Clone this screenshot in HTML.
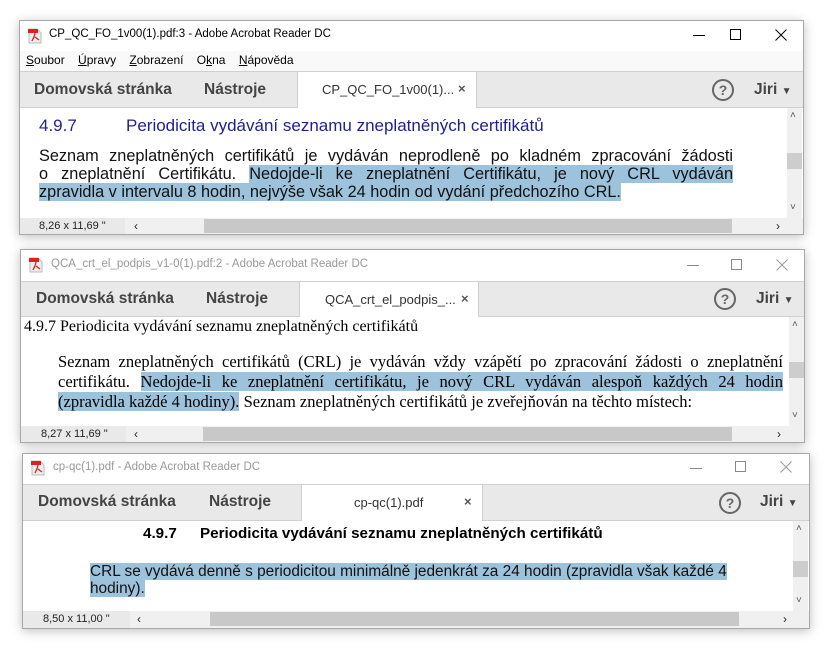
<!DOCTYPE html>
<html><head><meta charset="utf-8"><style>
*{margin:0;padding:0;box-sizing:border-box}
body{width:840px;height:656px;background:#fff;position:relative;overflow:hidden;font-family:"Liberation Sans","DejaVu Sans",sans-serif}
.win{position:absolute;background:#fff;border:1px solid #a8a8a8;box-shadow:0 2px 10px rgba(0,0,0,.25);overflow:hidden}
.a{position:absolute;white-space:nowrap}
.title{font-size:11.5px;color:#000}
.inact{color:#999}
.tb{position:absolute;left:0;right:0;background:#e9e9e9;border-top:1px solid #d0d0d0;border-bottom:1px solid #d0d0d0}
.tbt{font-size:15.5px;font-weight:bold;color:#444}
.tab{position:absolute;background:#fff;border-left:1px solid #cfcfcf;border-right:1px solid #cfcfcf;top:0;bottom:-1px}
.help{position:absolute;width:22px;height:22px;border:2px solid #666;border-radius:50%;color:#666;font-size:14px;font-weight:bold;text-align:center;line-height:18px}
.vs{position:absolute;width:15px;background:#f0f0f0}
.thumb{position:absolute;left:0;width:15px;height:16px;background:#cdcdcd}
.st{position:absolute;left:0;right:0;height:17px;background:#f0f0f0;font-size:11px;color:#222}
.hl{background:#9dc3dc}
.j{text-align:justify;text-align-last:justify}
</style></head><body>

<!-- WINDOW 1 -->
<div class="win" style="left:19px;top:20px;width:785px;height:215px">
  <svg class="a" style="left:8px;top:7px" width="14" height="16" viewBox="0 0 14 16"><path d="M1 1h8l4 4v10H1z" fill="#eee" stroke="#bbb"/><rect x="0" y="1" width="10" height="4" fill="#e31e1e"/><path d="M4 13c2-4 3-6 3-9M7 9l4 3" stroke="#e31e1e" fill="none" stroke-width="1.3"/></svg>
  <div class="a title" style="left:29px;top:7px">CP_QC_FO_1v00(1).pdf:3 - Adobe Acrobat Reader DC</div>
  <div class="a" style="left:673px;top:14px;width:12px;height:1px;background:#000"></div>
  <div class="a" style="left:710px;top:8px;width:11px;height:11px;border:1px solid #000"></div>
  <svg class="a" style="left:755px;top:8px" width="12" height="12"><path d="M0.5 0.5L11.5 11.5M11.5 0.5L0.5 11.5" stroke="#000" stroke-width="1"/></svg>
  <div class="a" style="left:0;right:0;top:30px;height:20px;background:#f9f9f9"></div>
  <div class="a" style="left:6px;top:32px;font-size:12px;word-spacing:10px"><u>S</u>oubor <u>Ú</u>pravy <u>Z</u>obrazení O<u>k</u>na <u>N</u>ápověda</div>
  <div class="tb" style="top:50px;height:37px">
    <div class="a tbt" style="left:14px;top:9px">Domovská stránka</div>
    <div class="a tbt" style="left:184px;top:9px">Nástroje</div>
    <div class="tab" style="left:277px;width:180px"><div class="a" style="left:24px;top:10px;font-size:13px;color:#333">CP_QC_FO_1v00(1)...</div><div class="a" style="left:160px;top:9px;font-size:13px;color:#555;font-weight:bold">×</div></div>
    <div class="help" style="left:692px;top:7px">?</div>
    <div class="a tbt" style="left:734px;top:9px">Jiri <span style="font-size:10px">▼</span></div>
  </div>
  <div class="a" style="left:19px;top:95px;font-size:17px;color:#1f1f8f">4.9.7</div>
  <div class="a" style="left:106px;top:95px;font-size:17px;color:#1f1f8f">Periodicita vydávání seznamu zneplatněných certifikátů</div>
  <div class="a" style="left:19px;top:126px;width:694px;font-size:16.3px;line-height:18px;color:#111;white-space:normal">
    <div class="j">Seznam zneplatněných certifikátů je vydáván neprodleně po kladném zpracování žádosti</div>
    <div class="j">o zneplatnění Certifikátu. <span class="hl">Nedojde-li ke zneplatnění Certifikátu, je nový CRL vydáván</span></div>
    <div><span class="hl">zpravidla v intervalu 8 hodin, nejvýše však 24 hodin od vydání předchozího CRL.</span></div>
  </div>
  <div class="vs" style="left:767px;top:87px;height:110px"><div class="a" style="left:3px;top:2px;font-size:10px;color:#555">˄</div><div class="thumb" style="top:45px"></div><div class="a" style="left:3px;top:94px;font-size:10px;color:#555">˅</div></div>
  <div class="st" style="top:197px">
    <div class="a" style="left:0;top:0;width:105px;height:17px;background:#e9e9e9"></div>
    <div class="a" style="left:19px;top:2px">8,26 x 11,69 "</div>
    <div class="a" style="left:114px;top:1px;font-size:12px">‹</div>
    <div class="a" style="left:184px;top:1px;width:528px;height:14px;background:#c8c8c8"></div>
    <div class="a" style="left:756px;top:1px;font-size:12px">›</div>
  </div>
</div>

<!-- WINDOW 2 -->
<div class="win" style="left:20px;top:249px;width:785px;height:194px">
  <svg class="a" style="left:8px;top:7px" width="14" height="16" viewBox="0 0 14 16"><path d="M1 1h8l4 4v10H1z" fill="#eee" stroke="#bbb"/><rect x="0" y="1" width="10" height="4" fill="#e31e1e"/><path d="M4 13c2-4 3-6 3-9M7 9l4 3" stroke="#e31e1e" fill="none" stroke-width="1.3"/></svg>
  <div class="a title inact" style="left:30px;top:8px">QCA_crt_el_podpis_v1-0(1).pdf:2 - Adobe Acrobat Reader DC</div>
  <div class="a" style="left:666px;top:15px;width:12px;height:1px;background:#888"></div>
  <div class="a" style="left:710px;top:9px;width:11px;height:11px;border:1px solid #888"></div>
  <svg class="a" style="left:755px;top:9px" width="12" height="12"><path d="M0.5 0.5L11.5 11.5M11.5 0.5L0.5 11.5" stroke="#999" stroke-width="1"/></svg>
  <div class="tb" style="top:31px;height:36px">
    <div class="a tbt" style="left:15px;top:8px">Domovská stránka</div>
    <div class="a tbt" style="left:185px;top:8px">Nástroje</div>
    <div class="tab" style="left:278px;width:180px"><div class="a" style="left:25px;top:10px;font-size:13px;color:#333">QCA_crt_el_podpis_...</div><div class="a" style="left:161px;top:9px;font-size:13px;color:#555;font-weight:bold">×</div></div>
    <div class="help" style="left:693px;top:6px">?</div>
    <div class="a tbt" style="left:735px;top:8px">Jiri <span style="font-size:10px">▼</span></div>
  </div>
  <div class="a" style="left:3px;top:68px;font-family:'Liberation Serif',serif;font-size:16px;color:#000">4.9.7 Periodicita vydávání seznamu zneplatněných certifikátů</div>
  <div class="a" style="left:37px;top:102px;width:725px;font-family:'Liberation Serif',serif;font-size:16.5px;line-height:20px;color:#000;white-space:normal">
    <div class="j">Seznam zneplatněných certifikátů (CRL) je vydáván vždy vzápětí po zpracování žádosti o zneplatnění</div>
    <div class="j">certifikátu. <span class="hl">Nedojde-li ke zneplatnění certifikátu, je nový CRL vydáván alespoň každých 24 hodin</span></div>
    <div><span class="hl">(zpravidla každé 4 hodiny).</span> Seznam zneplatněných certifikátů je zveřejňován na těchto místech:</div>
  </div>
  <div class="vs" style="left:768px;top:67px;height:109px"><div class="a" style="left:3px;top:2px;font-size:10px;color:#555">˄</div><div class="thumb" style="top:45px"></div><div class="a" style="left:3px;top:93px;font-size:10px;color:#555">˅</div></div>
  <div class="st" style="top:176px">
    <div class="a" style="left:0;top:0;width:105px;height:17px;background:#e9e9e9"></div>
    <div class="a" style="left:20px;top:2px">8,27 x 11,69 "</div>
    <div class="a" style="left:113px;top:1px;font-size:12px">‹</div>
    <div class="a" style="left:182px;top:1px;width:529px;height:14px;background:#c8c8c8"></div>
    <div class="a" style="left:756px;top:1px;font-size:12px">›</div>
  </div>
</div>

<!-- WINDOW 3 -->
<div class="win" style="left:22px;top:453px;width:788px;height:176px">
  <svg class="a" style="left:8px;top:6px" width="14" height="16" viewBox="0 0 14 16"><path d="M1 1h8l4 4v10H1z" fill="#eee" stroke="#bbb"/><rect x="0" y="1" width="10" height="4" fill="#e31e1e"/><path d="M4 13c2-4 3-6 3-9M7 9l4 3" stroke="#e31e1e" fill="none" stroke-width="1.3"/></svg>
  <div class="a title inact" style="left:30px;top:7px">cp-qc(1).pdf - Adobe Acrobat Reader DC</div>
  <div class="a" style="left:667px;top:14px;width:12px;height:1px;background:#888"></div>
  <div class="a" style="left:712px;top:7px;width:11px;height:11px;border:1px solid #888"></div>
  <svg class="a" style="left:757px;top:7px" width="12" height="12"><path d="M0.5 0.5L11.5 11.5M11.5 0.5L0.5 11.5" stroke="#999" stroke-width="1"/></svg>
  <div class="tb" style="top:30px;height:37px">
    <div class="a tbt" style="left:15px;top:8px">Domovská stránka</div>
    <div class="a tbt" style="left:186px;top:8px">Nástroje</div>
    <div class="tab" style="left:278px;width:182px"><div class="a" style="left:52px;top:10px;font-size:13px;color:#333">cp-qc(1).pdf</div><div class="a" style="left:162px;top:9px;font-size:13px;color:#555;font-weight:bold">×</div></div>
    <div class="help" style="left:696px;top:7px">?</div>
    <div class="a tbt" style="left:737px;top:8px">Jiri <span style="font-size:10px">▼</span></div>
  </div>
  <div class="a" style="left:120px;top:71px;font-size:15.2px;font-weight:bold;color:#000">4.9.7</div>
  <div class="a" style="left:177px;top:71px;font-size:15.2px;font-weight:bold;color:#000">Periodicita vydávání seznamu zneplatněných certifikátů</div>
  <div class="a" style="left:67px;top:109px;font-size:15.4px;line-height:17px;color:#111">
    <div><span class="hl">CRL se vydává denně s periodicitou minimálně jedenkrát za 24 hodin (zpravidla však každé 4</span></div>
    <div><span class="hl">hodiny).</span></div>
  </div>
  <div class="vs" style="left:770px;top:67px;height:90px"><div class="a" style="left:3px;top:2px;font-size:10px;color:#555">˄</div><div class="thumb" style="top:40px"></div><div class="a" style="left:3px;top:74px;font-size:10px;color:#555">˅</div></div>
  <div class="st" style="top:157px">
    <div class="a" style="left:0;top:0;width:107px;height:17px;background:#e9e9e9"></div>
    <div class="a" style="left:20px;top:2px">8,50 x 11,00 "</div>
    <div class="a" style="left:114px;top:1px;font-size:12px">‹</div>
    <div class="a" style="left:187px;top:1px;width:529px;height:14px;background:#c8c8c8"></div>
    <div class="a" style="left:760px;top:1px;font-size:12px">›</div>
  </div>
</div>
</body></html>
